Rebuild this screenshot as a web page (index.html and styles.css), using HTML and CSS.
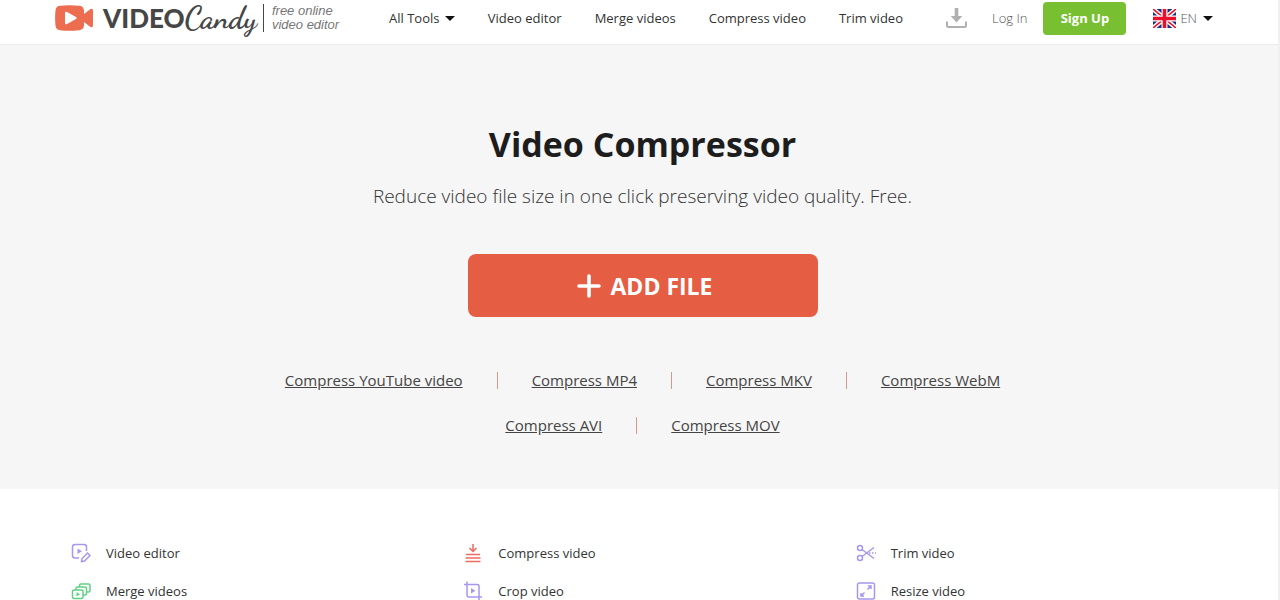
FILE: index.html
```html
<!DOCTYPE html>
<html lang="en">
<head>
  <meta charset="UTF-8" />
  <meta name="viewport" content="width=device-width, initial-scale=1.0"/>
  <title>Video Compressor</title>
  <link rel="stylesheet" href="styles.css">
</head>
<body>
  <header class="header">
    <a class="logo" href="#">
      <svg class="logo-icon" width="38" height="26" viewBox="0 0 38 26">
        <path d="M5 .8Q14-.5 24 .8Q28.500 1 29 5.500V9L35.500 4Q38 3 38 6V20Q38 23 35.500 22L29 17V20.500Q28.500 25 24 25.200Q14 26.500 5 25.200Q1 25 .5 20.500Q-.3 13 .5 5.500Q1 1 5 .8Z" fill="#ed6d51"/>
        <path d="M10 8Q10 6 12 7L21 12Q22.500 13 21 14L12 19Q10 20 10 18Z" fill="#fff"/>
      </svg>
      <span class="logo-video">VIDEO</span>
      <span class="logo-candy">Candy</span>
      <span class="logo-slogan">free online<br>video editor</span>
    </a>

    <nav class="nav">
      <a href="#">All Tools <i class="caret"></i></a>
      <a href="#">Video editor</a>
      <a href="#">Merge videos</a>
      <a href="#">Compress video</a>
      <a href="#">Trim video</a>
    </nav>

    <div class="user">
      <a class="downloads" href="#" aria-label="Downloads">
        <svg width="21" height="20" viewBox="0 0 21 20">
          <path d="M8.700 0h3.600v8h4L10.500 14.500 4.700 8h4Z" fill="#b0b0b0"/>
          <path d="M1 13.500V17.500Q1 19 2.500 19H18.500Q20 19 20 17.500V13.500" fill="none" stroke="#b0b0b0" stroke-width="2"/>
        </svg>
      </a>
      <a class="login" href="#">Log In</a>
      <button class="signup" type="button">Sign Up</button>
      <button class="lang" type="button">
        <svg width="23" height="19" viewBox="0 0 23 19">
          <path d="M0 0H23V19H0Z" fill="#1b2f7d"/>
          <path d="M0 0 23 19M23 0 0 19" stroke="#fff" stroke-width="4.500"/>
          <path d="M0 0 23 19M23 0 0 19" stroke="#e8112d" stroke-width="1.600"/>
          <path d="M11.500 0V19M0 9.500H23" stroke="#fff" stroke-width="6"/>
          <path d="M11.500 0V19M0 9.500H23" stroke="#e8112d" stroke-width="3.600"/>
        </svg>
        EN <i class="caret"></i>
      </button>
    </div>
  </header>

  <main class="hero">
    <h1>Video Compressor</h1>
    <p class="subtitle">Reduce video file size in one click preserving video quality. Free.</p>
    <button class="add-file" type="button">
      <svg width="24" height="24" viewBox="0 0 24 24">
        <path d="M12 2V22M2 12H22" stroke="#fff" stroke-width="3.600" stroke-linecap="round"/>
      </svg>
      ADD FILE
    </button>

    <div class="formats">
      <a href="#">Compress YouTube video</a>
      <a href="#">Compress MP4</a>
      <a href="#">Compress MKV</a>
      <a href="#">Compress WebM</a>
    </div>
    <div class="formats">
      <a href="#">Compress AVI</a>
      <a href="#">Compress MOV</a>
    </div>
  </main>

  <!-- Tools list -->
  <section class="tools">
    <a class="purple" href="#">
      <svg viewBox="0 0 20 20">
        <path d="M8 15H4Q1.500 15 1.500 12.500V4Q1.500 1.500 4 1.500H13Q15.500 1.500 15.500 4V8"/>
        <path class="fill" d="M6.500 5.500V11L11 8.200Z"/>
        <path d="M10.500 18.500 11 15.500 16.500 10 19 12.500 13.500 18Z"/>
      </svg>
      Video editor
    </a>
    <a class="red" href="#">
      <svg viewBox="0 0 20 20">
        <path d="M10 1V8M6.500 5 10 8.500 13.500 5M3 11.500H17M2.500 15H17.500M2.500 18.500H17.500"/>
      </svg>
      Compress video
    </a>
    <a class="purple" href="#">
      <svg viewBox="0 0 20 20">
        <circle cx="4" cy="5" r="2.500"/>
        <circle cx="4" cy="15" r="2.500"/>
        <path d="M6 6.500 18 15.500M6 13.500 18 4.500"/>
        <path d="M13 10H20" stroke-dasharray="1.500 1.500"/>
      </svg>
      Trim video
    </a>
    <a class="green" href="#">
      <svg viewBox="0 0 20 20">
        <rect x="1.500" y="9" width="10.500" height="8.500" rx="1.500"/>
        <path d="M5 9V7.500Q5 6 6.500 6H14Q15.500 6 15.500 7.500V12.500Q15.500 14 14 14H12M8.500 6V4.500Q8.500 3 10 3H17.500Q19 3 19 4.500V9.500Q19 11 17.500 11H15.500"/>
        <path class="fill" d="M5.500 11V15.500L9 13.200Z"/>
      </svg>
      Merge videos
    </a>
    <a class="purple" href="#">
      <svg viewBox="0 0 20 20">
        <path d="M1 3.500H14Q16 3.500 16 5.500V19.500M4 0.500V14Q4 16 6 16H19"/>
        <path class="fill" d="M8 7V12.500L12.500 9.800Z"/>
      </svg>
      Crop video
    </a>
    <a class="purple" href="#">
      <svg viewBox="0 0 20 20">
        <rect x="1.500" y="2" width="17" height="16" rx="2"/>
        <path d="M11.500 8.500 15 5M12 5H15V8M8.500 11.500 5 15M5 12V15H8"/>
      </svg>
      Resize video
    </a>
  </section>
</body>
</html>
```
FILE: styles.css
```css
/* Base Styles */
* {
  box-sizing: border-box;
}

body {
  margin: 0;
  font-family: "Open Sans", "Noto Sans", sans-serif;
  font-size: 13px;
  color: #333;
  background: #fff;
  border-right: 2px solid #f0f0f0;
}

a {
  color: inherit;
  text-decoration: none;
}

button {
  font-family: inherit;
  border: none;
  cursor: pointer;
}

/* Header */
.header {
  display: flex;
  align-items: center;
  height: 45px;
  padding: 0 65px 8px 55px;
  border-bottom: 1px solid #ececec;
}

.logo {
  display: flex;
  align-items: center;
  width: 334px;
  color: #464646;
}

.logo-icon {
  margin-right: 10px;
}

.logo-video {
  font-family: Lato, sans-serif;
  font-size: 26px;
  font-weight: 900;
}

.logo-candy {
  font-family: "Dancing Script", "Liberation Serif", serif;
  font-size: 31px;
  font-weight: 700;
  line-height: 32px;
}

.logo-slogan {
  margin-left: 6px;
  padding-left: 8px;
  border-left: 1px solid #464646;
  font-family: "Liberation Sans", Arial, sans-serif;
  font-size: 13px;
  font-style: italic;
  line-height: 14px;
  color: #777;
  white-space: nowrap;
}

.nav {
  display: flex;
  gap: 33px;
  white-space: nowrap;
}

.caret {
  display: inline-block;
  margin-left: 2px;
  border: 5px solid transparent;
  border-top-color: #111;
  border-bottom: 0;
  vertical-align: 2px;
}

.user {
  display: flex;
  align-items: center;
  margin-left: auto;
  white-space: nowrap;
}

.downloads {
  display: flex;
}

.login {
  margin: 0 16px 0 25px;
  font-weight: 300;
  color: #555;
}

.signup {
  width: 83px;
  height: 33px;
  padding: 0;
  border-radius: 4px;
  background: #78c032;
  color: #fff;
  font-size: 13px;
  font-weight: 700;
}

.lang {
  display: flex;
  align-items: center;
  gap: 4px;
  margin-left: 27px;
  padding: 0;
  background: none;
  color: #555;
  font-size: 13px;
  font-weight: 300;
}

/* Hero */
.hero {
  display: flex;
  flex-direction: column;
  align-items: center;
  padding: 75px 48px 41px 55px;
  background: #f6f6f6;
}

.hero h1 {
  margin: 0;
  font-size: 34px;
  line-height: 48px;
  color: #1d1d1d;
}

.subtitle {
  margin: 13px 0 43px;
  font-size: 19px;
  font-weight: 300;
  line-height: 30px;
  color: #333;
}

.add-file {
  display: flex;
  align-items: center;
  justify-content: center;
  gap: 9px;
  width: 350px;
  height: 63px;
  margin-bottom: 41px;
  padding: 0 0 0 5px;
  border-radius: 8px;
  background: #e55d43;
  color: #fff;
  font-size: 23px;
  font-weight: 700;
}

.formats {
  display: flex;
  font-size: 15px;
  line-height: 45px;
  color: #444;
}

.formats a {
  text-decoration: underline;
}

.formats a + a {
  display: flex;
  align-items: center;
}

.formats a + a::before {
  content: "";
  width: 1px;
  height: 17px;
  margin: 0 34px;
  background: #d09a8c;
}

/* Tools */
.tools {
  display: grid;
  grid-template-columns: repeat(3, 1fr);
  padding: 45px 30px 0 71px;
}

.tools a {
  display: flex;
  align-items: center;
  gap: 15px;
  line-height: 38px;
}

.tools svg {
  width: 20px;
  height: 20px;
  fill: none;
  stroke: currentColor;
  stroke-width: 1.500;
}

.tools .fill {
  fill: currentColor;
  stroke: none;
}

.purple svg {
  color: #a797ee;
}

.red svg {
  color: #ec6b60;
}

.green svg {
  color: #62d184;
}
```
